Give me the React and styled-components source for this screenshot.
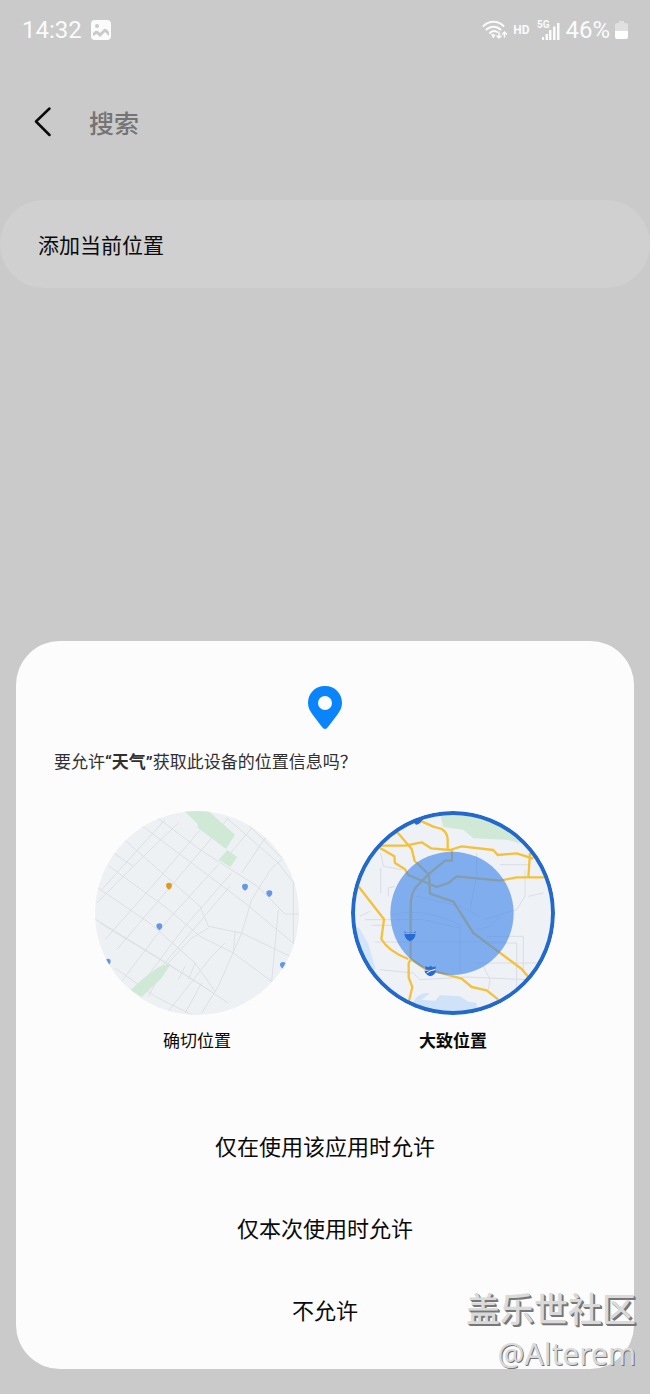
import React, { useState } from "react";
import styled, { createGlobalStyle } from "styled-components";

const GlobalStyle = createGlobalStyle`
  * { box-sizing: border-box; }
  body {
    margin: 0;
    background: #cacaca;
    color: #0b0b0b;
    font-family: "Noto Sans CJK SC", sans-serif;
  }
  button, input { font: inherit; color: inherit; }
`;

const Screen = styled.div`
  position: relative;
  display: flex;
  flex-direction: column;
  min-height: 100vh;
  padding-bottom: 25px;
`;

const StatusBar = styled.header`
  display: flex;
  justify-content: space-between;
  align-items: center;
  height: 60px;
  padding: 0 22px;
  color: #fbfbfb;
  font-family: Roboto, sans-serif;
  font-size: 24px;
  line-height: 28px;
`;

const StatusGroup = styled.div`
  display: flex;
  align-items: center;
  gap: ${(p) => p.$gap}px;
  svg { display: block; flex: none; }
`;

const Tag = styled.span`
  padding-right: 3px;
  font-size: 12px;
  font-weight: 700;
  line-height: 16px;
`;

const SearchBar = styled.div`
  display: flex;
  align-items: center;
  height: 124px;
  padding: 0 32px;
  gap: 33px;
`;

const BackButton = styled.button`
  display: flex;
  padding: 0;
  border: 0;
  background: none;
`;

const SearchInput = styled.input`
  flex: 1;
  min-width: 0;
  padding: 0;
  border: 0;
  outline: 0;
  background: none;
  font-size: 25px;
  line-height: 36px;
  font-weight: 500;
  &::placeholder { color: #747474; opacity: 1; }
`;

const PlaceButton = styled.button`
  height: 88px;
  margin: 16px 0 24px;
  padding: 0 38px;
  border: 0;
  border-radius: 44px;
  background: #d0d0d0;
  text-align: left;
  font-size: 21px;
  line-height: 30px;
`;

const Sheet = styled.section`
  display: flex;
  flex-direction: column;
  margin: auto 16px 0;
  padding: 45px 38px 19px;
  border-radius: 44px;
  background: #fcfcfc;
`;

const PinIcon = styled.svg`
  display: block;
  align-self: center;
`;

const Question = styled.h1`
  margin: 20px 0 36px;
  color: #303030;
  font-family: Roboto, "Noto Sans CJK SC", sans-serif;
  font-size: 17px;
  line-height: 26px;
  font-weight: 400;
`;

const Choices = styled.div`
  display: flex;
  justify-content: center;
  gap: 52px;
`;

const Choice = styled.label`
  display: flex;
  flex-direction: column;
  align-items: center;
  gap: 12px;
  font-size: 17px;
  line-height: 26px;
  font-weight: ${(p) => (p.$selected ? 700 : 400)};
  cursor: pointer;
`;

const Radio = styled.input`
  position: absolute;
  opacity: 0;
  pointer-events: none;
`;

const MapFrame = styled.div`
  position: relative;
  width: 204px;
  height: 204px;
  border-radius: 50%;
  overflow: hidden;
  svg { display: block; }
  &::after {
    content: "";
    position: absolute;
    inset: 0;
    border-radius: 50%;
    border: ${(p) => (p.$selected ? "4px solid #2369cb" : "0")};
  }
`;

const Actions = styled.div`
  display: flex;
  flex-direction: column;
  margin-top: 51px;
`;

const ActionButton = styled.button`
  height: 82px;
  padding: 0;
  border: 0;
  background: none;
  font-size: 22px;
  line-height: 32px;
`;

const Watermark = styled.div`
  position: absolute;
  right: 14px;
  bottom: 18px;
  display: flex;
  flex-direction: column;
  align-items: flex-end;
  color: #dadada;
  pointer-events: none;
`;

const Community = styled.span`
  font-size: 34px;
  line-height: 48px;
  font-weight: 500;
  text-shadow: 1px 1px 0 #777, 2px 2px 0 #777;
`;

const Author = styled.span`
  font-family: "Noto Sans", sans-serif;
  font-size: 30px;
  line-height: 44px;
  text-shadow: 1px 1px 0 #757575;
`;

function PictureIcon() {
  return (
    <svg width="20" height="20" viewBox="0 0 20 20" aria-hidden="true">
      <rect width="20" height="20" rx="4" fill="#fbfbfb" />
      <circle cx="6" cy="6" r="2" fill="#cacaca" />
      <path d="M2 16v-3q3-4 6-1l1 1 4-4q2-1 5 3v4l-2-2-2-2-5 5-3-3z" fill="#cacaca" />
    </svg>
  );
}

function WifiIcon() {
  return (
    <svg width="26" height="20" viewBox="0 0 26 20" fill="none" stroke="#fbfbfb" strokeWidth="2" strokeLinecap="round" aria-hidden="true">
      <path d="M1.5 6a14 14 0 0 1 20 0M4.500 9.500a10 10 0 0 1 14 0M8 13a5.500 5.500 0 0 1 7-1" />
      <path d="M10 14.500l3 .5-1.500 2.500z" fill="#fbfbfb" strokeWidth="1" />
      <path d="M17 12v6m-2-2 2 2 2-2M22.500 17v-5m-2 2 2-2 2 2" strokeWidth="1.500" />
    </svg>
  );
}

function SignalIcon() {
  return (
    <svg width="23" height="22" viewBox="0 0 23 22" fill="#fbfbfb" aria-hidden="true">
      <text x="0" y="9" fontSize="10" fontWeight="700" fontFamily="Roboto, sans-serif">5G</text>
      <path d="M5 18h2v3H5zM8.500 15h2.500v6H8.500zM12 11h2.500v10H12zM16 7.500h2.500V21H16zM20 4h2.500v17H20z" />
    </svg>
  );
}

function BatteryIcon() {
  return (
    <svg width="13" height="20" viewBox="0 0 13 20" aria-hidden="true">
      <path d="M4 1h5v2h2q2 0 2 2v6H0V5q0-2 2-2h2z" fill="#e0e0e0" />
      <path d="M0 11h13v6q0 2-2 2H2q-2 0-2-2z" fill="#fff" />
    </svg>
  );
}

function PreciseMap() {
  return (
    <svg width="204" height="204" viewBox="30 34 612 612" aria-hidden="true">
      <rect x="30" y="34" width="612" height="612" fill="#eef1f4" />
      <g fill="none" stroke="#dddfe2" strokeWidth="3">
        <path d="M205 45L345 150L520 262L600 343H645M170 78L340 205L480 310L630 435M118 120L345 320L370 380L470 400L625 475M70 150L145 200M70 198L245 325L345 410L445 460L560 545M35 262L200 375L330 490L390 575M30 358L245 490L385 580M45 370L300 525L430 610M90 505L210 590L330 650" />
        <path d="M425 55L580 190L630 255M490 75L590 175M240 60L50 270M280 70L170 175L35 310M350 85L210 250L60 420M430 55L300 210L95 450M400 195L250 360L110 545M440 220L300 380L150 580M500 85L420 180M550 100L470 220M590 180L560 205L500 300L470 400L400 560L350 640" />
        <path d="M435 260L350 360L180 560M370 385L320 415L240 500L190 590M625 245V430M580 330L560 545M420 430L380 470L250 635M300 500L280 540M350 550L300 640M450 395L445 460M330 490L310 540" />
      </g>
      <path d="M298 34H370L450 105L423 148L338 84V73Z" fill="#cfe9d6" />
      <path d="M427 151L457 172L436 202L401 180Z" fill="#cfe9d6" />
      <path d="M258 492L230 535L170 592L137 570L180 532L222 501Z" fill="#cfe9d6" />
      <path d="M244 252q8-6 16 0 4 10-8 18-12-8-8-18z" fill="#e29a1c" />
      <g fill="#6498e4">
        <path d="M472 255q8-6 16 0 4 10-8 18-12-8-8-18z" />
        <path d="M545 275q8-6 16 0 4 10-8 18-12-8-8-18z" />
        <path d="M215 374q8-6 16 0 4 10-8 18-12-8-8-18z" />
        <path d="M62 480q8-6 14 0 4 10-8 18z" />
        <path d="M586 490q8-6 16 0 4 10-8 18-12-8-8-18z" />
      </g>
    </svg>
  );
}

function ApproximateMap() {
  return (
    <svg width="204" height="204" viewBox="33 34 612 612" aria-hidden="true">
      <rect x="33" y="34" width="612" height="612" fill="#eef1f5" />
      <path d="M298 34H560L550 134L500 120L400 116L370 90L310 82Z" fill="#cfe9d6" />
      <path d="M33 380L58 385L84 430L107 508L80 520Z" fill="#d3e5fb" />
      <path d="M220 606Q235 577 270 580L245 600L285 603L300 587L360 590L385 606L410 610V650H200Z" fill="#d0e2f8" />
      <g fill="none" stroke="#dadde1" strokeWidth="3">
        <path d="M122 160L130 200L185 210M122 205V280M145 290V265L165 260M60 350L90 335M75 360H155M95 377H155M105 427H500M120 510L220 520L240 540L380 532L560 540M410 160V225L390 330M360 375V520M155 345Q250 320 360 375M160 360H250L360 385M480 195H570M555 210V290L530 330L430 360M565 290L610 280M440 410H550V520M450 430H530V570M400 490H590M430 500L450 540L445 570M410 390L450 380L480 350M230 290L360 320L420 350" />
      </g>
      <g fill="none" stroke="#f4c13b" strokeWidth="7" strokeLinejoin="round">
        <path d="M245 65L280 81L305 88Q322 98 323 120V150M120 138H195L245 128L273 146L330 151L365 140L460 151L473 166L530 161L580 177M172 98L215 148L224 184L267 225L270 282L340 306L400 400L545 508L565 532M120 145L163 170L165 190L195 209L205 226L290 262L325 250L350 230L480 243L530 233H620M570 160L565 233M336 152V183H315L265 224L230 260Q212 280 212 320V480L206 490V533L217 562L207 604M55 260L132 359L124 418Q145 455 205 478M212 478L255 507L365 537L395 562L440 572L475 600" />
      </g>
      <circle cx="336" cy="341" r="185" fill="#478ae8" fillOpacity=".66" />
      <g fill="#286bd7">
        <path d="M215 62L250 56Q242 75 228 75Z" />
        <path d="M192 394l6 5h24l6-5-2 6h-32zM193 403h34q-3 17-17 22-14-5-17-22z" />
        <path d="M256 500l10 3 6-5 6 5 10-3-3 10h-28zM253 513h35q-2 12-17 17-14-4-18-17z" />
      </g>
      <path d="M260 520l13-7 12-4" stroke="#e9f1ff" strokeWidth="3" fill="none" />
    </svg>
  );
}

const CHOICES = [
  { id: "precise", label: "确切位置", Map: PreciseMap },
  { id: "approximate", label: "大致位置", Map: ApproximateMap },
];

const ACTIONS = ["仅在使用该应用时允许", "仅本次使用时允许", "不允许"];

export default function App() {
  const [accuracy, setAccuracy] = useState("approximate");
  return (
    <Screen>
      <GlobalStyle />
      <StatusBar>
        <StatusGroup $gap={9}>
          <span>14:32</span>
          <PictureIcon />
        </StatusGroup>
        <StatusGroup $gap={5}>
          <WifiIcon />
          <Tag>HD</Tag>
          <SignalIcon />
          <span>46%</span>
          <BatteryIcon />
        </StatusGroup>
      </StatusBar>

      <SearchBar>
        <BackButton type="button" aria-label="返回">
          <svg width="24" height="30" viewBox="0 0 24 30" fill="none" stroke="#0b0b0b" strokeWidth="2.500" strokeLinecap="round" strokeLinejoin="round">
            <path d="M17.500 1.500L4 14.500L17.500 28" />
          </svg>
        </BackButton>
        <SearchInput type="text" placeholder="搜索" aria-label="搜索" />
      </SearchBar>
      <PlaceButton type="button">添加当前位置</PlaceButton>

      <Sheet>
        <PinIcon width="34" height="43" viewBox="0 0 34 43" aria-hidden="true">
          <path fillRule="evenodd" fill="#0a84fb" d="M17 0C7 0 0 7.500 0 17c0 4.500 2 8 4.500 11.500L14 41q3 4 6 0l9.500-12.500C32 25 34 21.500 34 17 34 7.500 27 0 17 0zm0 10a7 7 0 1 1 0 14 7 7 0 0 1 0-14z" />
        </PinIcon>
        <Question>要允许<b>“天气”</b>获取此设备的位置信息吗？</Question>
        <Choices role="radiogroup" aria-label="位置精确度">
          {CHOICES.map(({ id, label, Map }) => (
            <Choice key={id} $selected={accuracy === id}>
              <Radio type="radio" name="accuracy" checked={accuracy === id} onChange={() => setAccuracy(id)} />
              <MapFrame $selected={accuracy === id}>
                <Map />
              </MapFrame>
              {label}
            </Choice>
          ))}
        </Choices>
        <Actions>
          {ACTIONS.map((text) => (
            <ActionButton key={text} type="button">{text}</ActionButton>
          ))}
        </Actions>
      </Sheet>

      <Watermark>
        <Community>盖乐世社区</Community>
        <Author>@Alterem</Author>
      </Watermark>
    </Screen>
  );
}
